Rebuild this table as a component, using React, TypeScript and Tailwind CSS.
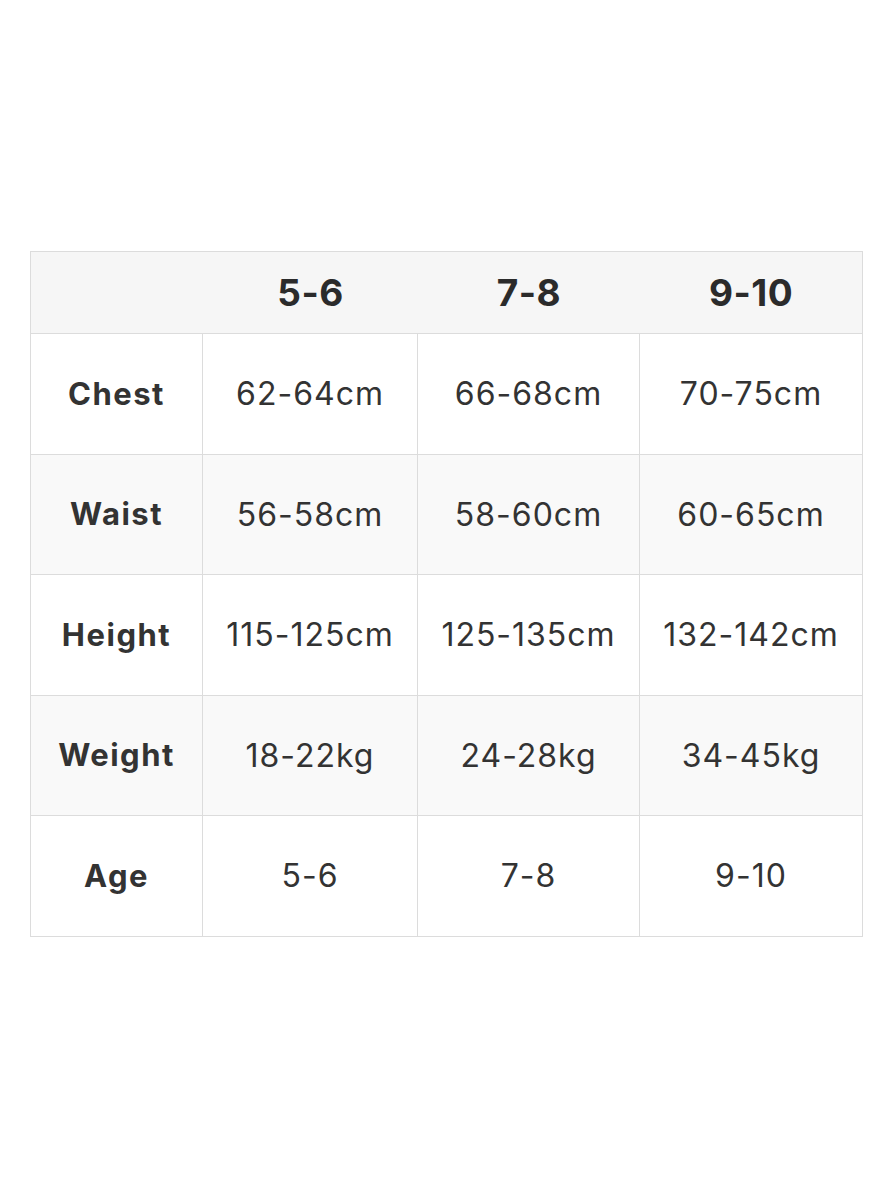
import React from "react";

const cols = ["5-6", "7-8", "9-10"];
const rows: { label: string; values: string[]; shade: boolean }[] = [
  { label: "Chest", values: ["62-64cm", "66-68cm", "70-75cm"], shade: false },
  { label: "Waist", values: ["56-58cm", "58-60cm", "60-65cm"], shade: true },
  { label: "Height", values: ["115-125cm", "125-135cm", "132-142cm"], shade: false },
  { label: "Weight", values: ["18-22kg", "24-28kg", "34-45kg"], shade: true },
  { label: "Age", values: ["5-6", "7-8", "9-10"], shade: false },
];
const heights = ["h-[121px]", "h-[120px]", "h-[121px]", "h-[120px]", "h-[120px]"];

export default function App() {
  return (
    <div
      className="w-[889px] h-[1200px] bg-white pt-[251px] pl-[30px]"
      style={{ fontFamily: "Inter, 'Liberation Sans', sans-serif" }}
    >
      <div className="w-[833px] border border-[#dcdcdc] text-[#2b2b2b]">
        <div className="grid grid-cols-[172px_215px_222px_222px] h-[82px] bg-[#f6f6f6] border-b border-[#dcdcdc]">
          <div />
          {cols.map((c) => (
            <div key={c} className="flex items-center justify-center text-[37px] font-bold tracking-[0.5px]">
              {c}
            </div>
          ))}
        </div>
        {rows.map((r, i) => (
          <div
            key={r.label}
            className={`grid grid-cols-[172px_215px_222px_222px] ${heights[i]} ${r.shade ? "bg-[#f9f9f9]" : "bg-white"} ${i < rows.length - 1 ? "border-b border-[#dcdcdc]" : ""}`}
          >
            <div className="flex items-center justify-center text-[31px] font-bold tracking-[1.5px] text-[#333333] border-r border-[#dcdcdc]">
              {r.label}
            </div>
            {r.values.map((v, j) => (
              <div
                key={j}
                className={`flex items-center justify-center text-[32px] font-normal tracking-[1px] text-[#333333] ${j < 2 ? "border-r border-[#dcdcdc]" : ""}`}
              >
                {v}
              </div>
            ))}
          </div>
        ))}
      </div>
    </div>
  );
}
